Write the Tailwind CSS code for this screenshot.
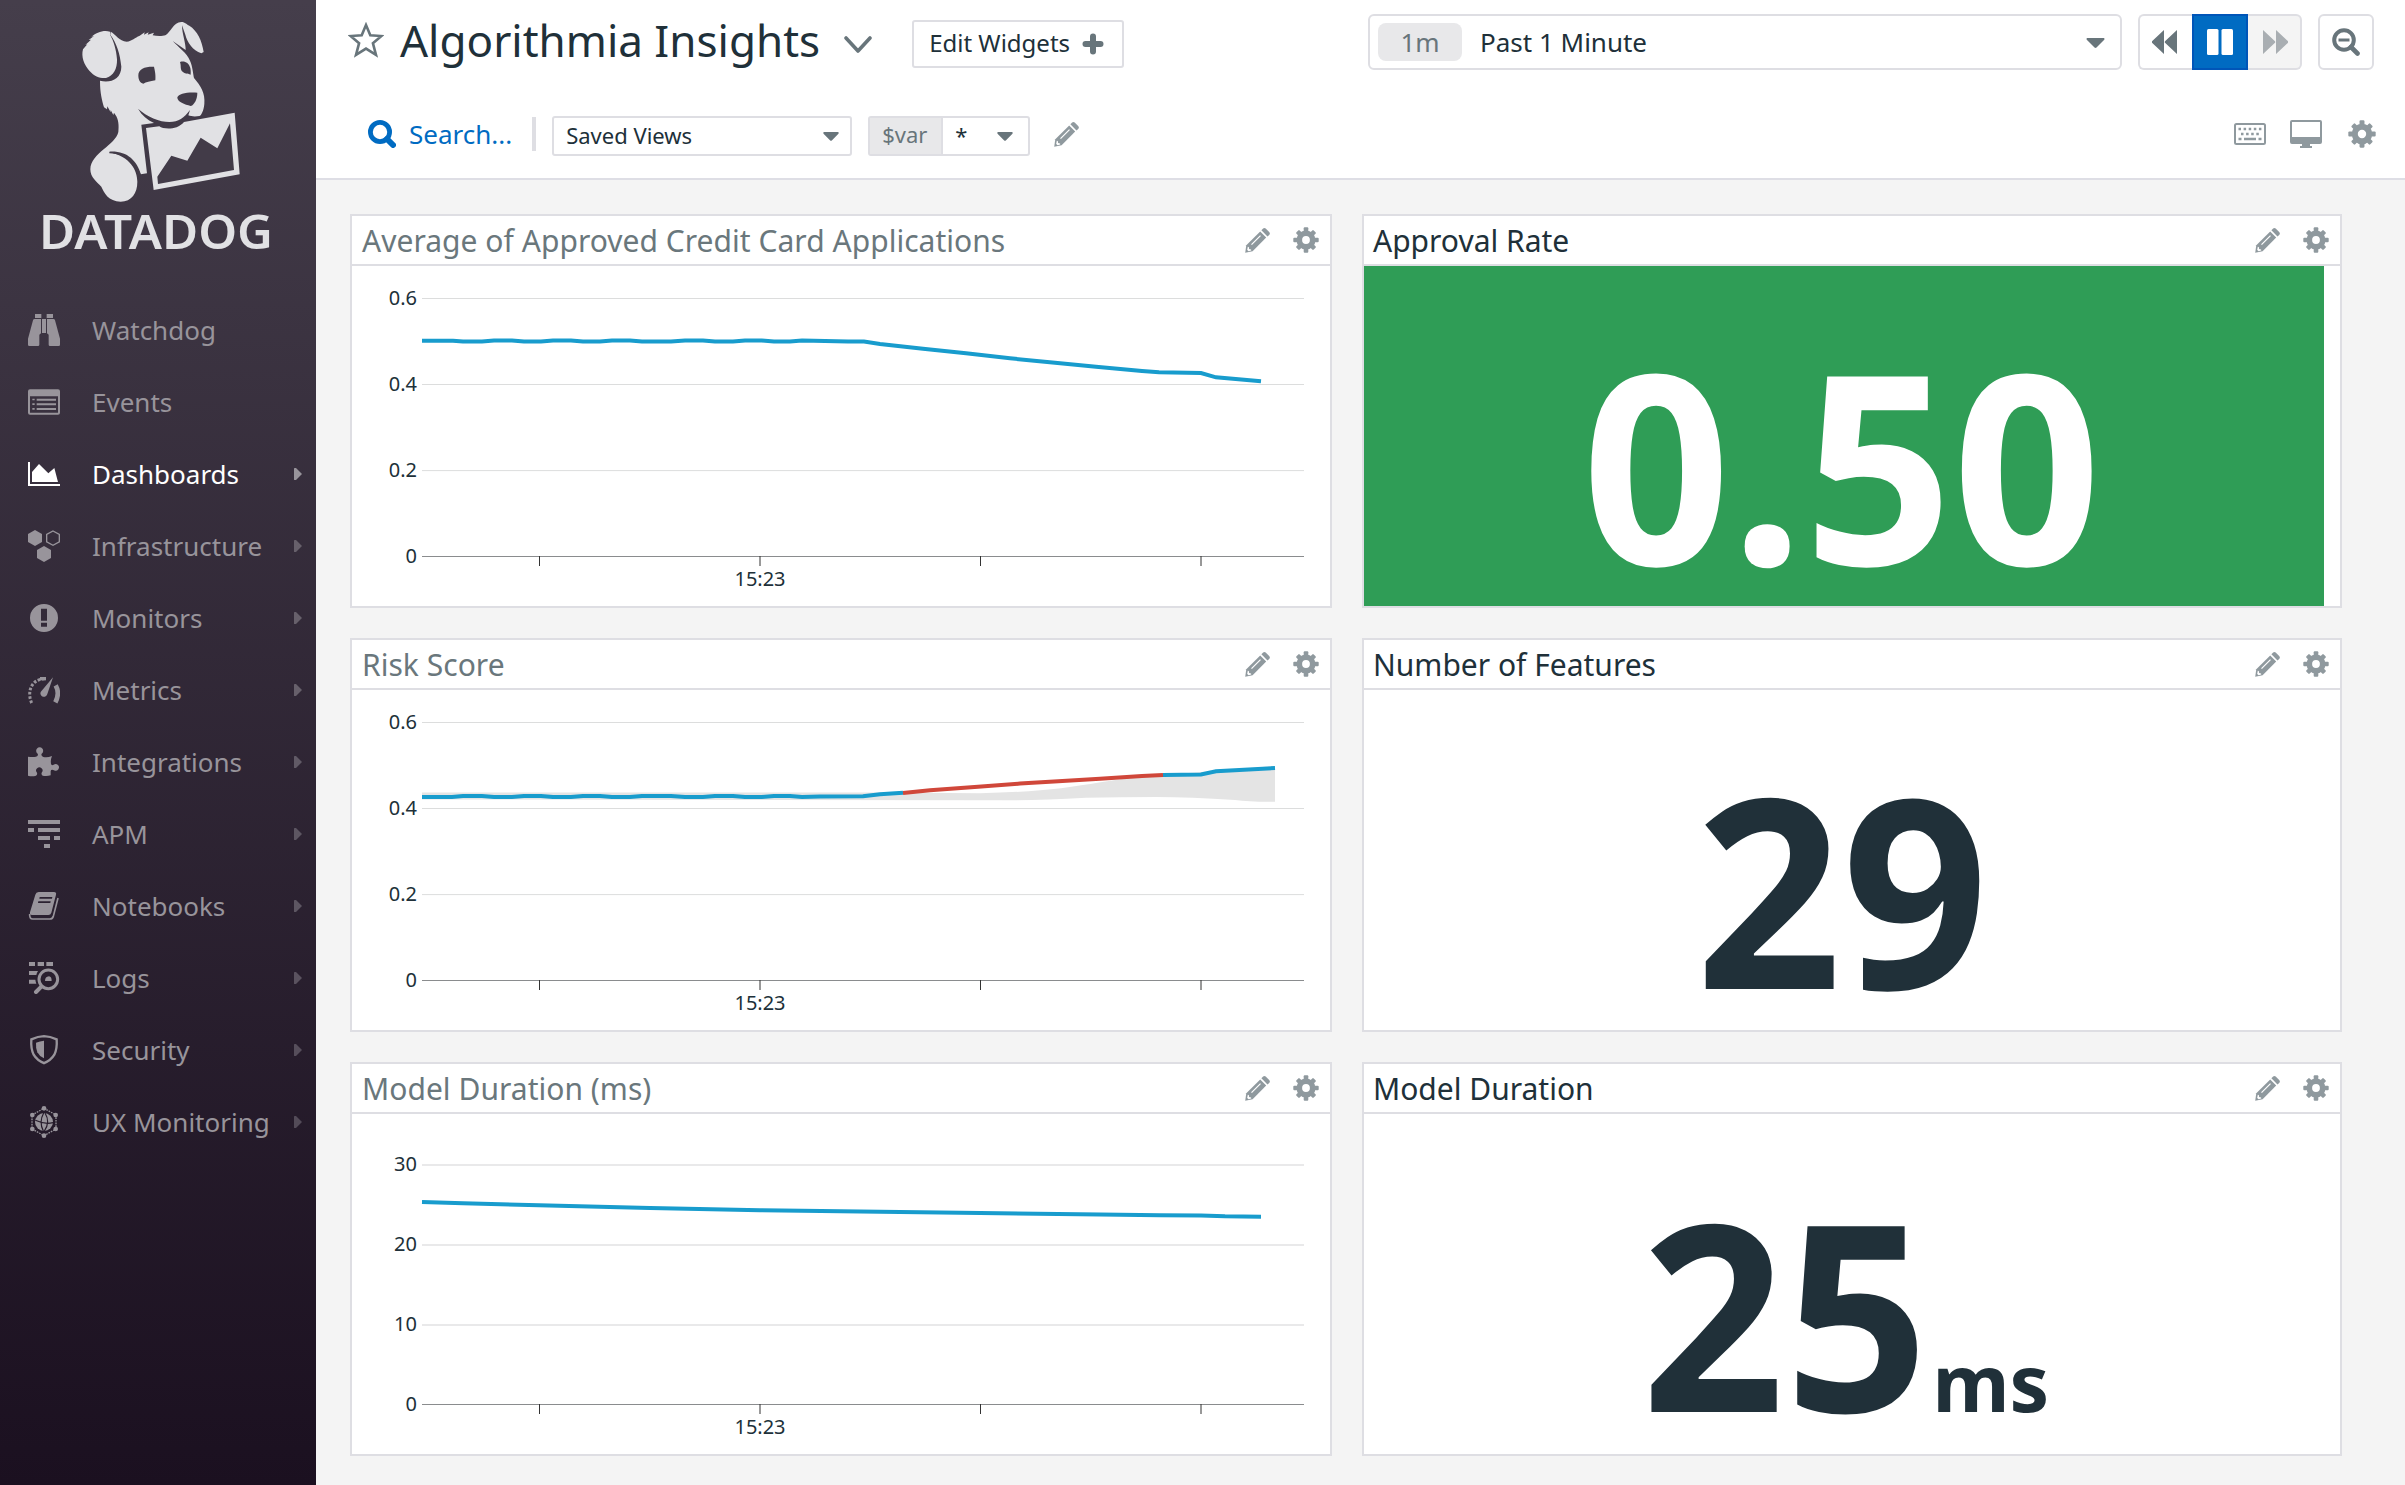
<!DOCTYPE html>
<html lang="en">
<head>
<meta charset="utf-8">
<title>Algorithmia Insights</title>
<script src="https://cdn.jsdelivr.net/npm/@tailwindcss/browser@4"></script>
</head>
<body class="flex h-[1485px] w-[2405px] overflow-hidden bg-[#f4f4f4] font-['Noto_Sans',sans-serif] text-[#203039]">

<!-- shared icons -->
<svg class="hidden">
  <symbol id="pencil" viewBox="0 0 25 25">
    <path d="M.2 24.8 1.3 17.2 15.2 3.4l6 6L7.6 23.2Z" fill="currentColor"/>
    <path d="m16.4 2.2 1.7-1.6q1.3-1 2.6 0l3.7 3.7q.9 1.3 0 2.4l-1.9 1.7Z" fill="currentColor"/>
    <path d="M6.500 16.600 15.500 7.600" stroke="#fff" stroke-width="1.200"/>
    <path d="m2.800 18.800 1 .2.300 2 2 .400.100 1-2.600.800-1.400-1.200Z" fill="#fff"/>
  </symbol>
  <symbol id="gear" viewBox="0 0 26 26">
    <circle cx="13" cy="13" r="6.700" fill="none" stroke="currentColor" stroke-width="5.600"/>
    <g fill="currentColor">
      <rect x="10.700" y=".3" width="4.600" height="5" rx="1"/>
      <rect x="10.700" y="20.700" width="4.600" height="5" rx="1"/>
      <rect x=".3" y="10.700" width="5" height="4.600" rx="1"/>
      <rect x="20.700" y="10.700" width="5" height="4.600" rx="1"/>
      <g transform="rotate(45 13 13)">
        <rect x="10.700" y=".8" width="4.600" height="5" rx="1"/>
        <rect x="10.700" y="20.200" width="4.600" height="5" rx="1"/>
        <rect x=".8" y="10.700" width="5" height="4.600" rx="1"/>
        <rect x="20.200" y="10.700" width="5" height="4.600" rx="1"/>
      </g>
    </g>
  </symbol>
  <symbol id="arrow" viewBox="0 0 8 12"><path d="M0 .5Q0 0 .6 0H2L8 6 2 12H.6Q0 12 0 11.500Z" fill="currentColor"/></symbol>
</svg>

<aside class="flex w-[316px] shrink-0 flex-col bg-linear-to-b from-[#453e4b] to-[#1b1020]">
  <svg class="h-[294px] w-[316px] shrink-0" viewBox="0 0 948 882">
    <g fill="#e1e1e4">
      <path d="M332 95C346 102 358 123 380 125C396 124 406 112 418 108L434 97 432 104 446 97 443 104 462 98 458 106C470 109 488 109 496 106C512 98 520 66 544 66C556 66 560 74 568 77C592 92 606 122 611 156L604 160C578 150 562 128 556 104L546 76C546 100 558 132 557 150L518 123C535 142 560 158 570 182C578 200 579 220 582 234C602 258 616 278 613 312C611 332 604 347 598 348C588 350 574 350 565 346L570 330C552 354 536 366 508 366C480 366 440 350 414 326C426 346 442 360 462 369L424 374 441 520 422 523C414 500 385 456 328 457C390 470 412 510 412 545C412 580 395 604 362 605C325 604 312 578 304 560C290 545 271 532 271 508C271 484 292 464 311 448C332 430 350 416 355 396C357 376 356 358 346 344L342 338 340 345 332 330 332 337 322 319 321 328 312 322C306 300 300 280 300 242C330 250 364 238 364 200C360 160 350 130 331 104Z"/>
      <path d="M330 95C312 88 288 98 274 110L282 108 266 120 273 119 256 135 262 133 249 148C243 170 252 194 268 212C284 230 302 236 318 234C340 228 352 208 351 178C349 148 340 122 331 106Z"/>
      <path d="M438 384 478 379C490 388 530 392 552 366L704 338 719 523 461 570Z"/>
    </g>
    <g fill="#423b48">
      <path d="M415 226C415 206 436 199 462 200C463 206 468 222 466 241C450 245 438 246 430 251C420 250 415 240 415 226Z"/>
      <path d="M540 186C554 182 566 188 571 204C573 214 572 222 572 224C562 220 554 222 546 214C540 204 544 198 540 186Z"/>
      <path d="M532 292C536 281 560 276 592 278C592 296 584 314 572 318C554 314 532 306 532 292Z"/>
      <path d="M690 370 702 510 474 552 472 530 514 467 562 482 602 413 652 445Z"/>
      <path d="M328 455C380 452 410 480 423 524L413 530C408 490 385 464 328 460Z"/>
    </g>
    <text x="117" y="748" textLength="702" lengthAdjust="spacingAndGlyphs" font-size="143" font-weight="560" fill="#e1e1e4">DATADOG</text>
  </svg>

  <nav class="flex flex-col text-[26px] text-[#98949b]">
    <a class="flex h-18 items-center pl-7"><svg class="size-8" viewBox="0 0 96 96" fill="currentColor"><path d="M21 0H40V12H21ZM56 0H75V12H56ZM42 15H54V57H42ZM20 15H39V58L34 62V92Q34 96 30 96H4Q0 96 0 92V74L15 19Q16 15 20 15ZM76 15H57V58L62 62V92Q62 96 66 96H92Q96 96 96 92V74L81 19Q80 15 76 15Z"/></svg><span class="ml-8">Watchdog</span></a>
    <a class="flex h-18 items-center pl-7"><svg class="size-8" viewBox="0 0 96 96" fill="currentColor"><path fill-rule="evenodd" d="M6 10H90Q96 10 96 16V80Q96 86 90 86H6Q0 86 0 80V16Q0 10 6 10ZM6 31V80H90V31ZM13 38H20V43H13ZM26 38H84V44H26ZM13 52H20V57H13ZM26 52H84V58H26ZM13 66H20V71H13ZM26 66H84V72H26Z"/></svg><span class="ml-8">Events</span></a>
    <a class="flex h-18 items-center pl-7 text-white"><svg class="size-8" viewBox="0 0 96 96" fill="currentColor"><path d="M0 12H6V78H96V84H0ZM12 42 33 18 61 46 79 30 90 72H12Z"/></svg><span class="ml-8">Dashboards</span><svg class="mr-3.5 ml-auto h-3 w-2 text-[#98949b]"><use href="#arrow"/></svg></a>
    <a class="flex h-18 items-center pl-7"><svg class="size-8" viewBox="0 0 96 96" fill="currentColor"><path d="M21 0 42 12V36L21 48 0 36V12ZM48 48 69 60V84L48 96 27 84V60Z"/><path d="M75 3 94 13.500V35.500L75 46 56 35.500V13.500Z" fill="none" stroke="currentColor" stroke-width="4"/></svg><span class="ml-8">Infrastructure</span><svg class="mr-3.5 ml-auto h-3 w-2 text-[#67606b]"><use href="#arrow"/></svg></a>
    <a class="flex h-18 items-center pl-7"><svg class="size-8" viewBox="0 0 96 96" fill="currentColor"><path fill-rule="evenodd" d="M48 6A42 42 0 1 1 48 90 42 42 0 1 1 48 6ZM39 20V56H57V20ZM39 62V74H57V62Z"/></svg><span class="ml-8">Monitors</span><svg class="mr-3.5 ml-auto h-3 w-2 text-[#67606b]"><use href="#arrow"/></svg></a>
    <a class="flex h-18 items-center pl-7"><svg class="size-8" viewBox="0 0 96 96" fill="currentColor"><path d="M11 87C-2 60 4 14 54 14" fill="none" stroke="currentColor" stroke-width="9" stroke-dasharray="8 5"/><path d="M36 14H54" stroke="currentColor" stroke-width="10"/><path d="M83 34C92 50 91 68 82 85" fill="none" stroke="currentColor" stroke-width="14"/><path d="M75 10 58 60A10.500 10.500 0 1 1 38 54Z"/></svg><span class="ml-8">Metrics</span><svg class="mr-3.5 ml-auto h-3 w-2 text-[#67606b]"><use href="#arrow"/></svg></a>
    <a class="flex h-18 items-center pl-7"><svg class="size-8" viewBox="0 0 96 96" fill="currentColor"><path d="M0 32Q14 34 24 32 32 30 29 23A10.500 10.500 0 1 1 41 23Q38 30 46 33 58 36 72 30 67 42 69 53 70 60 77 56A10 10 0 1 1 78 73Q69 69 68 76V88Q56 92 44 89 39 87 41 80A9.500 9.500 0 1 0 27 80Q29 87 24 89 12 92 0 89Z"/></svg><span class="ml-8">Integrations</span><svg class="mr-3.5 ml-auto h-3 w-2 text-[#615a66]"><use href="#arrow"/></svg></a>
    <a class="flex h-18 items-center pl-7"><svg class="size-8" viewBox="0 0 96 96" fill="currentColor"><path d="M0 6H96V18H0ZM0 30H18V42H0ZM30 30H96V42H30ZM30 54H66V66H30ZM78 54H96V66H78ZM48 78H66V90H48Z"/></svg><span class="ml-8">APM</span><svg class="mr-3.5 ml-auto h-3 w-2 text-[#5d5662]"><use href="#arrow"/></svg></a>
    <a class="flex h-18 items-center pl-7"><svg class="size-8" viewBox="0 0 96 96" fill="currentColor"><path fill-rule="evenodd" d="M32 6H78Q86 6 84 14L70 68Q68 75 61 75H12Q4 75 6 67L22 14Q24 6 32 6ZM35 21 34 26H72L73 21ZM31 34 30 39H67L68 34Z"/><path d="M5 72Q4 87 14 87H66Q73 87 76 79L90 24" fill="none" stroke="currentColor" stroke-width="5"/></svg><span class="ml-8">Notebooks</span><svg class="mr-3.5 ml-auto h-3 w-2 text-[#5d5662]"><use href="#arrow"/></svg></a>
    <a class="flex h-18 items-center pl-7"><svg class="size-8" viewBox="0 0 96 96" fill="currentColor"><path d="M3 0H21V12H3ZM29 0H48V12H29ZM55 0H75V12H55ZM3 27H30Q26 33 25 39H3ZM3 53H22Q23 60 25 65H3Z"/><circle cx="61" cy="52" r="28" fill="none" stroke="currentColor" stroke-width="9"/><path d="M40 74 24 90" stroke="currentColor" stroke-width="12" stroke-linecap="round"/><path d="M51 57Q51 44 63 43 71 44 71 57Z"/></svg><span class="ml-8">Logs</span><svg class="mr-3.5 ml-auto h-3 w-2 text-[#5a525f]"><use href="#arrow"/></svg></a>
    <a class="flex h-18 items-center pl-7"><svg class="size-8" viewBox="0 0 96 96" fill="currentColor"><path d="M48 6.500Q66 7 86 16 88 44 79 62 69 79 48 87.500 27 79 17 62 8 44 10 16 30 7 48 6.500Z" fill="none" stroke="currentColor" stroke-width="7"/><path d="M48 20V73Q34 67 28 55 23 44 24 26 36 21 48 20Z"/></svg><span class="ml-8">Security</span><svg class="mr-3.5 ml-auto h-3 w-2 text-[#564e5b]"><use href="#arrow"/></svg></a>
    <a class="flex h-18 items-center pl-7"><svg class="size-8" viewBox="0 0 96 96" fill="currentColor"><circle cx="48" cy="48" r="27"/><g fill="none" stroke="#261c2b" stroke-width="3.500"><path d="M47 21Q32 48 46 75M51 21Q68 48 49 75M22 43Q50 56 75 50"/></g><path d="M48 7 84 27V69L48 89 12 69V27Z" fill="none" stroke="currentColor" stroke-width="4" stroke-dasharray="5 3"/><circle cx="48" cy="7" r="7"/><circle cx="13" cy="27" r="7"/><circle cx="83" cy="27" r="7"/><circle cx="13" cy="69" r="7"/><circle cx="83" cy="69" r="7"/><circle cx="48" cy="89" r="7"/></svg><span class="ml-8">UX Monitoring</span><svg class="mr-3.5 ml-auto h-3 w-2 text-[#534b58]"><use href="#arrow"/></svg></a>
  </nav>
</aside>

<main class="flex min-w-0 flex-1 flex-col">
  <header class="h-[180px] border-b-2 border-[#dedee5] bg-white">
    <div class="flex h-[84px] items-center pr-[31px] pl-8">
      <svg class="mb-1 h-9 w-9" viewBox="0 0 36 36" fill="none" stroke="#68757b" stroke-width="2.600"><path d="M18 3 22.300 13.200 33.500 14 24.900 21.200 28 32.800 18 26.600 8 32.800 11.100 21.200 2.500 14 13.700 13.200Z"/></svg>
      <h1 class="-mt-1 ml-4 text-[44px] leading-[60px]">Algorithmia Insights</h1>
      <svg class="ml-6 mt-1.5 h-[18px] w-7" viewBox="0 0 28 18" fill="none" stroke="#68757b" stroke-width="3.600" stroke-linecap="round" stroke-linejoin="round"><path d="M2 2 14 15 26 2"/></svg>
      <button class="ml-10 mt-[3px] flex h-12 w-[212px] items-center rounded-[3px] border-2 border-[#dedee3] pl-[15px] text-[24px]"><span class="-mt-0.5">Edit Widgets</span><svg class="ml-3 size-[22px]" viewBox="0 0 22 22" stroke="#68757b" stroke-width="6" stroke-linecap="round"><path d="M11 3.500V18.500M3.500 11H18.500"/></svg></button>
      <div class="ml-auto flex h-14 w-[754px] items-center rounded-md border-2 border-[#dedee3] pl-2 text-[26px]">
        <span class="flex h-[38px] w-21 items-center justify-center rounded-lg bg-[#e8e8ea] text-[#68757b]">1m</span>
        <span class="ml-[18px]">Past 1 Minute</span>
        <svg class="mt-0.5 mr-[15px] ml-auto h-[10px] w-[19px]" viewBox="0 0 19 10"><path d="M1 0H18Q19 1 18 2L10.500 9.500Q9.500 10.300 8.500 9.500L1 2Q0 1 1 0Z" fill="#68757b"/></svg>
      </div>
      <div class="ml-4 flex h-14 w-[164px]">
        <span class="flex w-[54px] items-center justify-center rounded-l-md border-2 border-r-0 border-[#dedee3] pr-[3px]"><svg class="h-6 w-[25px]" viewBox="0 0 25 24" fill="#68757b"><path d="M12 0V24L0 12.800Q-.5 12 0 11.200ZM25 0V24L13 12.800Q12.500 12 13 11.200Z"/></svg></span>
        <span class="flex w-14 items-center justify-center border-2 border-[#0055b8] bg-[#006bc2]"><svg class="h-[26px] w-[26px]" viewBox="0 0 26 26" fill="#fff"><rect width="11.500" height="26" rx="1.500"/><rect x="14.500" width="11.500" height="26" rx="1.500"/></svg></span>
        <span class="flex w-[54px] items-center justify-center rounded-r-md border-2 border-l-0 border-[#dedee3] bg-[#f4f4f4] pl-0.5"><svg class="h-6 w-[25px]" viewBox="0 0 25 24" fill="#a9aeb2"><path d="M0 0V24L12 12.800Q12.500 12 12 11.200ZM13 0V24L25 12.800Q25.500 12 25 11.200Z"/></svg></span>
      </div>
      <div class="ml-4 flex size-14 items-center justify-center rounded-md border-2 border-[#dedee3]"><svg class="size-7" viewBox="0 0 28 28" fill="none" stroke="#68757b"><circle cx="12" cy="12" r="9.800" stroke-width="4"/><path d="M19 19 25.500 25.500" stroke-width="4.600" stroke-linecap="round"/><path d="M6.500 12H17.500" stroke-width="3"/></svg></div>
    </div>
    <div class="flex h-[100px] items-center pr-[29px] pl-[52px]">
      <svg class="size-7" viewBox="0 0 28 28" fill="none" stroke="#006bc2"><circle cx="12" cy="12" r="9.600" stroke-width="4.800"/><path d="M19 19 25 25" stroke-width="6" stroke-linecap="round"/></svg>
      <span class="ml-[13px] text-[26px] text-[#006bc2]">Search...</span>
      <span class="ml-5 h-[34px] w-1 bg-[#dedee3]"></span>
      <div class="ml-4 mt-[3px] flex h-10 w-[300px] items-center rounded-[3px] border-2 border-[#dedee3] pr-[11px] pl-3 text-[22px]"><span class="-mt-px">Saved Views</span><svg class="ml-auto mt-0.5 h-[9px] w-4" viewBox="0 0 16 9"><path d="M.8 0H15.200Q16.200 1 15.200 1.900L8.800 8.500Q8 9.200 7.200 8.500L.8 1.900Q-.2 1 .8 0Z" fill="#68757b"/></svg></div>
      <div class="ml-4 mt-[3px] flex h-10 w-[162px] rounded-[3px] border-2 border-[#dedee3] text-[22px]">
        <span class="flex w-[73px] items-center border-r-2 border-[#dedee3] bg-[#e8e8ea] pb-0.5 pl-3 text-[#68757b]">$var</span>
        <span class="flex flex-1 items-center pr-[15px] pl-3">*<svg class="ml-auto mt-0.5 h-[9px] w-4" viewBox="0 0 16 9"><path d="M.8 0H15.200Q16.200 1 15.200 1.900L8.800 8.500Q8 9.200 7.200 8.500L.8 1.900Q-.2 1 .8 0Z" fill="#68757b"/></svg></span>
      </div>
      <svg class="ml-6 size-[25px] text-[#8f999e]"><use href="#pencil"/></svg>
      <svg class="ml-auto h-[22px] w-8" viewBox="0 0 32 22" fill="none" stroke="#8f999e"><rect x="1" y="1" width="30" height="20" rx="1.500" stroke-width="2"/><path d="M4.500 6H27.500" stroke-width="2.600" stroke-dasharray="2.500 2.600"/><path d="M7 11H26" stroke-width="2.600" stroke-dasharray="2.500 2.600"/><path d="M4.500 16H7.500M10 16H22M24.500 16H27.500" stroke-width="2.600"/></svg>
      <svg class="ml-6 h-7 w-8" viewBox="0 0 32 28" fill="#8f999e"><path fill-rule="evenodd" d="M2 0H30Q32 0 32 2V22Q32 24 30 24H20V26H22V28H10V26H12V24H2Q0 24 0 22V2Q0 0 2 0ZM2 2V17H30V2Z"/></svg>
      <svg class="ml-[26px] size-7 text-[#8f999e]"><use href="#gear"/></svg>
    </div>
  </header>

  <section class="grid grid-cols-[982px_980px] gap-[30px] pt-[34px] pl-[34px]">
    <article class="h-[394px] border-2 border-[#dedee3] bg-white">
      <div class="flex h-[50px] items-center border-b-2 border-[#dedee3] pr-[11px] pl-[10px] text-[30px] tracking-[0.03px] text-[#6a777c]">Average of Approved Credit Card Applications<svg class="ml-auto size-[25px] text-[#8f999e]"><use href="#pencil"/></svg><svg class="ml-[23px] size-[26px] text-[#8f999e]"><use href="#gear"/></svg></div>
      <svg class="block h-[340px] w-[978px]" viewBox="352 266 978 340">
        <path d="M422 298.500H1304M422 384.500H1304M422 470.600H1304" stroke="#dcdddd"/>
        <path d="M422 556.500H1304" stroke="#8a8c8e"/>
        <path d="M539.500 556V566M760 556V566M980.500 556V566M1201 556V566" stroke="#333"/>
        <g font-size="20" fill="#203039" text-anchor="end"><text x="417" y="305">0.6</text><text x="417" y="391">0.4</text><text x="417" y="477">0.2</text><text x="417" y="563">0</text></g>
        <text x="760" y="586" font-size="20" fill="#203039" text-anchor="middle">15:23</text>
        <polyline fill="none" stroke="#189ccd" stroke-width="4" points="422,340.700 453,340.700 463,341.600 482,341.600 494,340.600 512,340.600 524,341.600 541,341.600 553,340.600 571,340.600 583,341.600 600,341.600 612,340.600 630,340.600 642,341.600 671,341.600 685,340.600 703,340.600 715,341.600 733,341.600 745,340.600 762,340.600 774,341.600 790,341.600 802,340.600 848,341.600 864,341.600 880,344 923,348.700 966,353.300 1010,358.300 1055,362.700 1096,366.700 1142,371 1159,372.300 1201,373 1216,377.300 1261,381.300"/>
      </svg>
    </article>

    <article class="h-[394px] border-2 border-[#dedee3] bg-white">
      <div class="flex h-[50px] items-center border-b-2 border-[#dedee3] pr-[11px] pl-[9px] text-[30px]">Approval Rate<svg class="ml-auto size-[25px] text-[#8f999e]"><use href="#pencil"/></svg><svg class="ml-[23px] size-[26px] text-[#8f999e]"><use href="#gear"/></svg></div>
      <div class="flex h-[340px] w-[960px] items-center justify-center bg-[#2f9d56] pt-[54px] pr-1 text-[264px] leading-none font-bold text-white"><span class="scale-x-[0.985]">0.50</span></div>
    </article>

    <article class="h-[394px] border-2 border-[#dedee3] bg-white">
      <div class="flex h-[50px] items-center border-b-2 border-[#dedee3] pr-[11px] pl-[10px] text-[30px] tracking-[0.03px] text-[#6a777c]">Risk Score<svg class="ml-auto size-[25px] text-[#8f999e]"><use href="#pencil"/></svg><svg class="ml-[23px] size-[26px] text-[#8f999e]"><use href="#gear"/></svg></div>
      <svg class="block h-[340px] w-[978px]" viewBox="352 690 978 340">
        <path d="M422 722.500H1304M422 808.500H1304M422 894.600H1304" stroke="#dcdddd"/>
        <path d="M422 980.500H1304" stroke="#8a8c8e"/>
        <path d="M539.500 980V990M760 980V990M980.500 980V990M1201 980V990" stroke="#333"/>
        <g font-size="20" fill="#203039" text-anchor="end"><text x="417" y="729">0.6</text><text x="417" y="815">0.4</text><text x="417" y="901">0.2</text><text x="417" y="987">0</text></g>
        <text x="760" y="1010" font-size="20" fill="#203039" text-anchor="middle">15:23</text>
        <path fill="#e4e4e4" d="M422 792.500H880L980 793.300Q1030 792 1061 788.300C1090 784 1110 781 1131 777.500C1150 774 1180 774 1201 772L1275 766V801.700Q1250 802 1235 800 1190 797 1156 797 1120 797 1086 797.700 1040 800.300 1006 800.300L422 799.500Z"/>
        <g fill="none" stroke="#189ccd" stroke-width="4">
          <polyline points="422,797 452,797 463,796 482,796 494,797 512,797 524,796 541,796 553,797 571,797 583,796 600,796 612,797 630,797 642,796 671,796 685,797 703,797 715,796 733,796 745,797 762,797 774,796 790,796 802,797 820,796.400 863,796.300 880,794.300 903,792.800"/>
          <polyline points="1163,775 1201,774.500 1216,771.300 1275,768"/>
        </g>
        <polyline fill="none" stroke="#d0473a" stroke-width="4" points="903,792.900 930,790.300 978,786.700 1020,783.600 1054,781.600 1100,778.800 1142,776 1163,775"/>
      </svg>
    </article>

    <article class="h-[394px] border-2 border-[#dedee3] bg-white">
      <div class="flex h-[50px] items-center border-b-2 border-[#dedee3] pr-[11px] pl-[9px] text-[30px]">Number of Features<svg class="ml-auto size-[25px] text-[#8f999e]"><use href="#pencil"/></svg><svg class="ml-[23px] size-[26px] text-[#8f999e]"><use href="#gear"/></svg></div>
      <div class="flex h-[340px] w-[960px] items-center justify-center pt-[54px] pr-1 text-[264px] leading-none font-bold"><span class="scale-x-[0.97]">29</span></div>
    </article>

    <article class="h-[394px] border-2 border-[#dedee3] bg-white">
      <div class="flex h-[50px] items-center border-b-2 border-[#dedee3] pr-[11px] pl-[10px] text-[30px] tracking-[0.03px] text-[#6a777c]">Model Duration (ms)<svg class="ml-auto size-[25px] text-[#8f999e]"><use href="#pencil"/></svg><svg class="ml-[23px] size-[26px] text-[#8f999e]"><use href="#gear"/></svg></div>
      <svg class="block h-[340px] w-[978px]" viewBox="352 1114 978 340">
        <path d="M422 1165H1304M422 1245H1304M422 1325H1304" stroke="#e9e9ea" stroke-width="2"/>
        <path d="M422 1404.500H1304" stroke="#8a8c8e"/>
        <path d="M539.500 1404V1414M760 1404V1414M980.500 1404V1414M1201 1404V1414" stroke="#333"/>
        <g font-size="20" fill="#203039" text-anchor="end"><text x="417" y="1171">30</text><text x="417" y="1251">20</text><text x="417" y="1331">10</text><text x="417" y="1411">0</text></g>
        <text x="760" y="1434" font-size="20" fill="#203039" text-anchor="middle">15:23</text>
        <polyline fill="none" stroke="#189ccd" stroke-width="4" points="422,1202 463,1203.300 539,1205.200 650,1208 760,1210.200 880,1211.800 980,1213 1100,1214.600 1160,1215.300 1201,1215.500 1225,1216.300 1261,1216.700"/>
      </svg>
    </article>

    <article class="h-[394px] border-2 border-[#dedee3] bg-white">
      <div class="flex h-[50px] items-center border-b-2 border-[#dedee3] pr-[11px] pl-[9px] text-[30px]">Model Duration<svg class="ml-auto size-[25px] text-[#8f999e]"><use href="#pencil"/></svg><svg class="ml-[23px] size-[26px] text-[#8f999e]"><use href="#gear"/></svg></div>
      <div class="flex h-[340px] w-[960px] items-baseline justify-center pt-[67px] pr-2 text-[260px] leading-none font-bold"><span class="origin-right scale-x-[0.965]">25</span><span class="ml-1 text-[79px]">ms</span></div>
    </article>
  </section>
</main>
</body>
</html>
